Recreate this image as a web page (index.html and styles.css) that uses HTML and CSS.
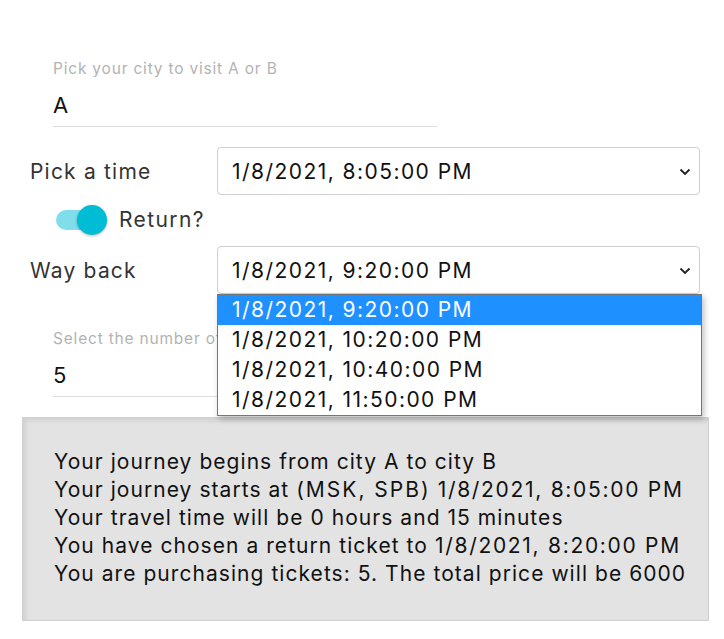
FILE: index.html
```html
<!DOCTYPE html>
<html>
<head>
<meta charset="utf-8">
<link rel="stylesheet" href="styles.css">
</head>
<body>
<div class="page">
  <div class="field city">
    <div class="field-label">Pick your city to visit A or B</div>
    <div class="field-value">A</div>
  </div>

  <div class="row first-row">
    <div class="row-label">Pick a time</div>
    <div class="select">
      <span>1/8/2021, 8:05:00 PM</span>
      <svg class="chev" width="12" height="8" viewBox="0 0 12 8"><path d="M1.5 1.5 L6 6 L10.5 1.5" fill="none" stroke="#222" stroke-width="1.8"/></svg>
    </div>
  </div>

  <div class="toggle-row">
    <div class="toggle"><div class="track"></div><div class="knob"></div></div>
    <span class="toggle-label">Return?</span>
  </div>

  <div class="row back-row">
    <div class="row-label">Way back</div>
    <div class="select-wrap">
      <div class="select">
        <span>1/8/2021, 9:20:00 PM</span>
        <svg class="chev" width="12" height="8" viewBox="0 0 12 8"><path d="M1.5 1.5 L6 6 L10.5 1.5" fill="none" stroke="#222" stroke-width="1.8"/></svg>
      </div>
      <ul class="dropdown">
        <li class="selected">1/8/2021, 9:20:00 PM</li>
        <li>1/8/2021, 10:20:00 PM</li>
        <li>1/8/2021, 10:40:00 PM</li>
        <li>1/8/2021, 11:50:00 PM</li>
      </ul>
    </div>
  </div>

  <div class="field count">
    <div class="field-label">Select the number of tickets</div>
    <div class="field-value">5</div>
  </div>

  <div class="summary">
    <div>Your journey begins from city A to city B</div>
    <div>Your journey starts at <span class="wide">(MSK, SPB)</span> <span class="date">1/8/2021, 8:05:00 PM</span></div>
    <div>Your travel time will be 0 hours and 15 minutes</div>
    <div>You have chosen a return ticket to <span class="date">1/8/2021, 8:20:00 PM</span></div>
    <div>You are purchasing tickets: 5. The total price will be 6000</div>
  </div>
</div>
</body>
</html>
```

FILE: styles.css
```css
* { box-sizing: border-box; }
html, body { margin: 0; padding: 0; background: #fff; }
body {
  font-family: Inter, Roboto, "Liberation Sans", sans-serif;
  color: #222;
}
.page {
  padding: 59px 0 0 30px;
  width: 724px;
}
.field {
  margin-left: 23px;
  width: 384px;
  border-bottom: 1px solid #dcdcdc;
}
.field-label {
  font-size: 15.5px;
  line-height: 20px;
  letter-spacing: 0.8px;
  color: #b3b3b3;
  white-space: nowrap;
  overflow: hidden;
}
.field-value {
  font-size: 22px;
  line-height: 26px;
  color: #111;
  padding: 13px 0 8px;
}
.row {
  display: flex;
  align-items: center;
}
.first-row { margin-top: 20px; }
.row-label {
  width: 187px;
  font-size: 21px;
  letter-spacing: 1.2px;
  color: #333;
}
.select {
  width: 483px;
  height: 48px;
  border: 1px solid #cfcfcf;
  border-radius: 4px;
  display: flex;
  align-items: center;
  justify-content: space-between;
  padding: 0 8px 0 14px;
  font-size: 21px;
  letter-spacing: 1.45px;
  color: #111;
  background: #fff;
}
.chev { margin-top: 1px; }
.toggle-row {
  display: flex;
  align-items: center;
  height: 51px;
  padding-left: 25px;
  padding-bottom: 2px;
}
.toggle {
  position: relative;
  width: 52px;
  height: 30px;
}
.track {
  position: absolute;
  left: 1px;
  top: 5px;
  width: 44px;
  height: 20px;
  border-radius: 10px;
  background: #80deea;
}
.knob {
  position: absolute;
  left: 22px;
  top: 0;
  width: 30px;
  height: 30px;
  border-radius: 50%;
  background: #00bcd4;
  box-shadow: 0 1px 3px rgba(0,0,0,0.3);
}
.toggle-label {
  margin-left: 12px;
  font-size: 21px;
  letter-spacing: 1.4px;
  color: #333;
}
.select-wrap { position: relative; }
.dropdown {
  position: absolute;
  left: 0;
  top: 48px;
  width: 485px;
  margin: 0;
  padding: 0;
  list-style: none;
  background: #fff;
  border: 1px solid #767676;
  box-shadow: 2px 3px 6px rgba(0,0,0,0.25);
  z-index: 5;
}
.dropdown li {
  height: 30px;
  line-height: 30px;
  padding-left: 14px;
  font-size: 21px;
  letter-spacing: 1.45px;
  color: #111;
}
.dropdown li.selected {
  background: #1e90ff;
  color: #fff;
}
.count { margin-top: 35px; }
.summary {
  margin: 20px 0 0 -8px;
  width: 687px;
  height: 204px;
  background: #e3e3e3;
  border: 1px solid #d0d0d0;
  box-shadow: inset 3px 3px 4px rgba(0,0,0,0.08);
  padding: 30px 0 0 31px;
  font-size: 21px;
  line-height: 28px;
  letter-spacing: 1.05px;
  color: #111;
  white-space: nowrap;
}
.summary .date { letter-spacing: 1.7px; }
.summary .wide { letter-spacing: 2px; }
```
